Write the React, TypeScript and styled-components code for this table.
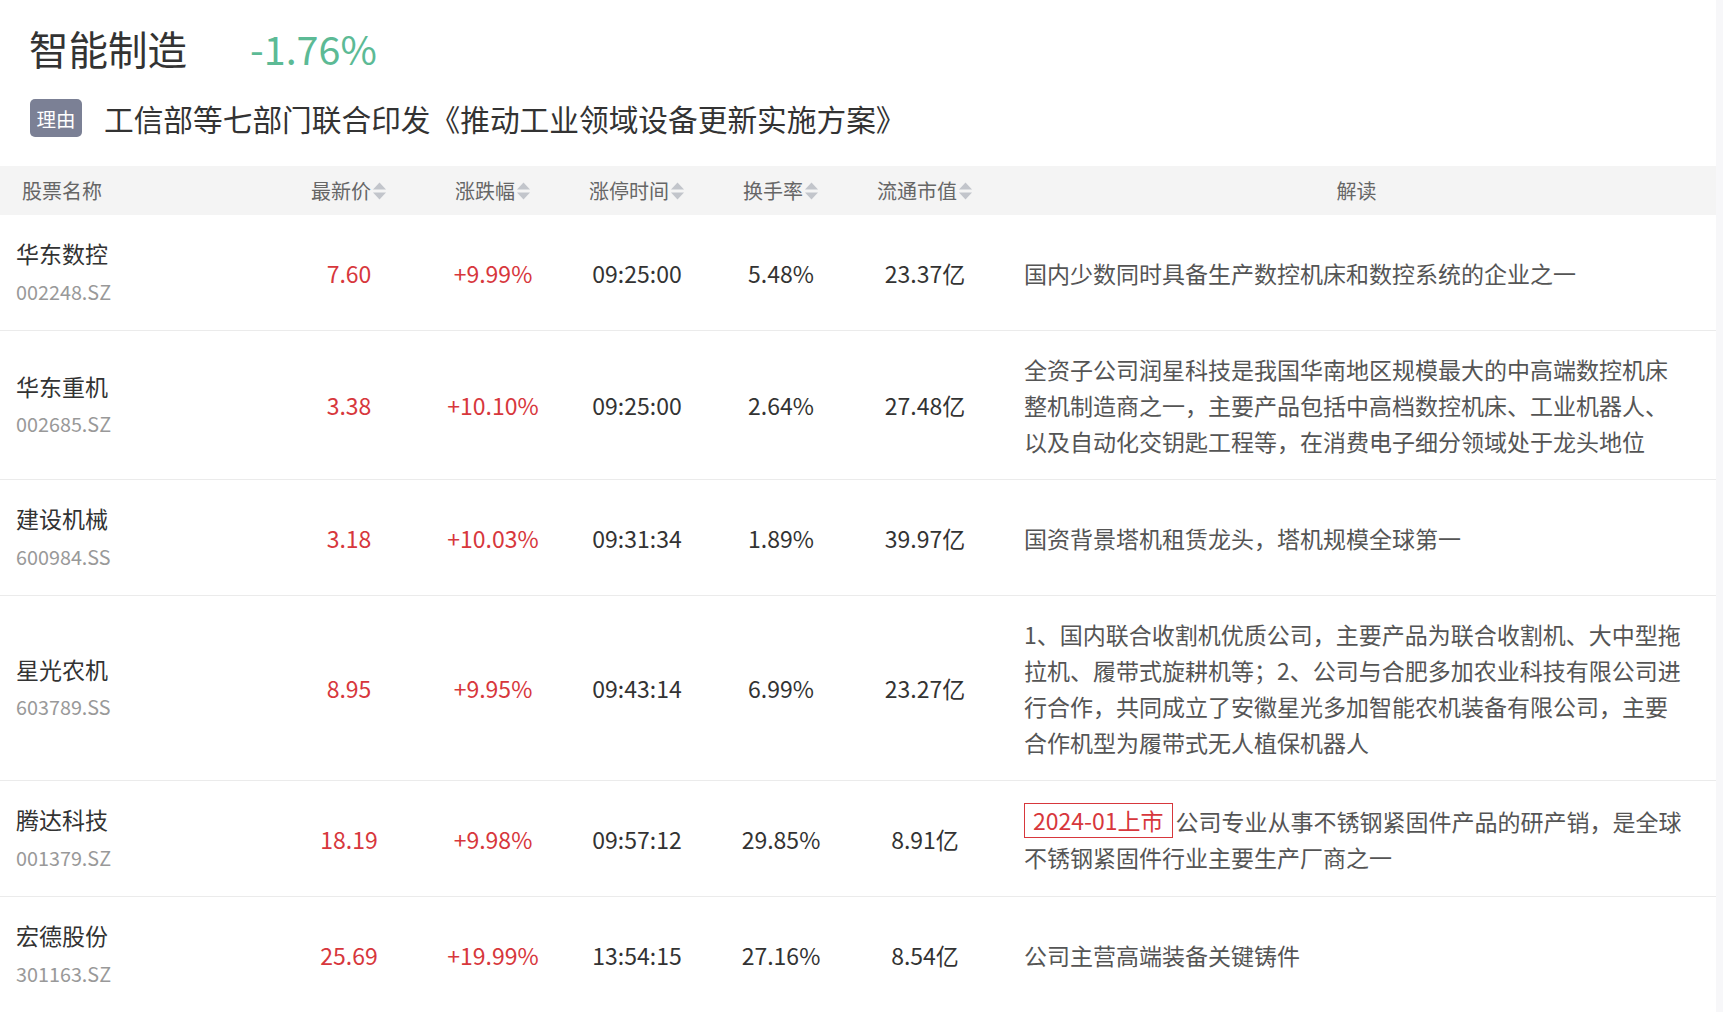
import React from "react";
import styled, { createGlobalStyle } from "styled-components";

const GlobalStyle = createGlobalStyle`
  html, body {
    margin: 0;
    padding: 0;
    background: #ffffff;
  }
  body {
    font-family: "Noto Sans CJK SC", "Noto Sans", "Liberation Sans", sans-serif;
    color: #333333;
  }
`;

const Page = styled.div`
  display: flex;
  width: 100%;
  min-height: 1012px;
`;

const Main = styled.div`
  flex: 1;
  min-width: 0;
`;

const ScrollTrack = styled.div`
  width: 7px;
  flex: none;
  background: #f7f7f9;
`;

const Intro = styled.div`
  padding: 19px 0 0 29px;
`;

const TitleRow = styled.div`
  display: flex;
  align-items: center;
  height: 58px;
  font-size: 39.5px;
  line-height: 58px;
`;

const Title = styled.span`
  color: #333333;
`;

const Change = styled.span<{ $up?: boolean }>`
  margin-left: 63px;
  color: ${(p) => (p.$up ? "#d7373c" : "#5cba95")};
`;

const ReasonRow = styled.div`
  display: flex;
  align-items: center;
  height: 38px;
  margin-top: 22px;
`;

const ReasonTag = styled.span`
  display: inline-flex;
  align-items: center;
  justify-content: center;
  width: 52px;
  height: 38px;
  margin-left: 1px;
  border-radius: 5px;
  background: #7b8095;
  color: #ffffff;
  font-size: 19.5px;
`;

const ReasonText = styled.span`
  margin-left: 22px;
  font-size: 29.7px;
  color: #333333;
  white-space: nowrap;
`;

const Table = styled.div`
  margin-top: 29px;
`;

const Grid = styled.div`
  display: grid;
  grid-template-columns: 277px repeat(5, 144px) 1fr;
`;

const HeadRow = styled(Grid)`
  height: 49px;
  background: #f4f4f4;
  align-items: center;
  font-size: 20px;
  color: #666666;
`;

const HeadCell = styled.div<{ $align?: "left" | "center" }>`
  display: flex;
  align-items: center;
  justify-content: ${(p) => (p.$align === "left" ? "flex-start" : "center")};
  padding-left: ${(p) => (p.$align === "left" ? "22px" : "0")};
  gap: 1px;
`;

const BodyRow = styled(Grid)`
  padding: 20px 0;
  border-bottom: 1px solid #ebebeb;
  align-items: center;
  font-size: 23px;
  line-height: 36px;
`;

const NameCell = styled.div`
  display: flex;
  flex-direction: column;
  padding-left: 16px;
  line-height: 37.5px;
`;

const StockName = styled.span`
  color: #333333;
`;

const StockCode = styled.span`
  color: #999999;
  font-size: 19.8px;
`;

const ValueCell = styled.div<{ $red?: boolean }>`
  text-align: center;
  color: ${(p) => (p.$red ? "#d7373c" : "#333333")};
`;

const DescCell = styled.div`
  padding: 0 27px 0 27px;
  color: #555555;
`;

const ListTag = styled.span`
  display: inline-block;
  box-sizing: border-box;
  height: 35px;
  line-height: 33px;
  padding: 0 8px;
  margin-right: 3px;
  border: 1px solid #d7373c;
  color: #d7373c;
  vertical-align: top;
`;

const SortIcon = () => (
  <svg width="15" height="22" viewBox="0 0 15 22" aria-hidden="true">
    <polygon points="7.5,2.5 14,9.5 1,9.5" fill="#c2c5cb" />
    <polygon points="1,12.5 14,12.5 7.5,19.5" fill="#c2c5cb" />
  </svg>
);

type Stock = {
  name: string;
  code: string;
  price: string;
  change: string;
  time: string;
  turnover: string;
  cap: string;
  tag?: string;
  desc: string;
};

const stocks: Stock[] = [
  {
    name: "华东数控",
    code: "002248.SZ",
    price: "7.60",
    change: "+9.99%",
    time: "09:25:00",
    turnover: "5.48%",
    cap: "23.37亿",
    desc: "国内少数同时具备生产数控机床和数控系统的企业之一",
  },
  {
    name: "华东重机",
    code: "002685.SZ",
    price: "3.38",
    change: "+10.10%",
    time: "09:25:00",
    turnover: "2.64%",
    cap: "27.48亿",
    desc: "全资子公司润星科技是我国华南地区规模最大的中高端数控机床整机制造商之一，主要产品包括中高档数控机床、工业机器人、以及自动化交钥匙工程等，在消费电子细分领域处于龙头地位",
  },
  {
    name: "建设机械",
    code: "600984.SS",
    price: "3.18",
    change: "+10.03%",
    time: "09:31:34",
    turnover: "1.89%",
    cap: "39.97亿",
    desc: "国资背景塔机租赁龙头，塔机规模全球第一",
  },
  {
    name: "星光农机",
    code: "603789.SS",
    price: "8.95",
    change: "+9.95%",
    time: "09:43:14",
    turnover: "6.99%",
    cap: "23.27亿",
    desc: "1、国内联合收割机优质公司，主要产品为联合收割机、大中型拖拉机、履带式旋耕机等；2、公司与合肥多加农业科技有限公司进行合作，共同成立了安徽星光多加智能农机装备有限公司，主要合作机型为履带式无人植保机器人",
  },
  {
    name: "腾达科技",
    code: "001379.SZ",
    price: "18.19",
    change: "+9.98%",
    time: "09:57:12",
    turnover: "29.85%",
    cap: "8.91亿",
    tag: "2024-01上市",
    desc: "公司专业从事不锈钢紧固件产品的研产销，是全球不锈钢紧固件行业主要生产厂商之一",
  },
  {
    name: "宏德股份",
    code: "301163.SZ",
    price: "25.69",
    change: "+19.99%",
    time: "13:54:15",
    turnover: "27.16%",
    cap: "8.54亿",
    desc: "公司主营高端装备关键铸件",
  },
];

const sortable = ["最新价", "涨跌幅", "涨停时间", "换手率", "流通市值"];

export default function App() {
  return (
    <>
      <GlobalStyle />
      <Page>
        <Main>
          <Intro>
            <TitleRow>
              <Title>智能制造</Title>
              <Change>-1.76%</Change>
            </TitleRow>
            <ReasonRow>
              <ReasonTag>理由</ReasonTag>
              <ReasonText>工信部等七部门联合印发《推动工业领域设备更新实施方案》</ReasonText>
            </ReasonRow>
          </Intro>
          <Table>
            <HeadRow>
              <HeadCell $align="left">股票名称</HeadCell>
              {sortable.map((h) => (
                <HeadCell key={h}>
                  {h}
                  <SortIcon />
                </HeadCell>
              ))}
              <HeadCell>解读</HeadCell>
            </HeadRow>
            {stocks.map((s) => (
              <BodyRow key={s.code}>
                <NameCell>
                  <StockName>{s.name}</StockName>
                  <StockCode>{s.code}</StockCode>
                </NameCell>
                <ValueCell $red>{s.price}</ValueCell>
                <ValueCell $red>{s.change}</ValueCell>
                <ValueCell>{s.time}</ValueCell>
                <ValueCell>{s.turnover}</ValueCell>
                <ValueCell>{s.cap}</ValueCell>
                <DescCell>
                  {s.tag && <ListTag>{s.tag}</ListTag>}
                  {s.desc}
                </DescCell>
              </BodyRow>
            ))}
          </Table>
        </Main>
        <ScrollTrack />
      </Page>
    </>
  );
}
